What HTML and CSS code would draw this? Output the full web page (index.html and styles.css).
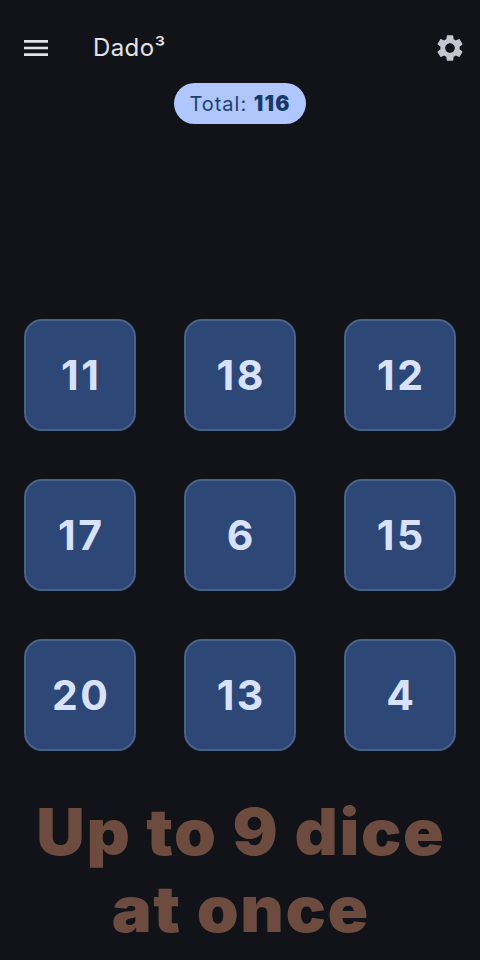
FILE: index.html
```html
<!DOCTYPE html>
<html lang="en">
<head>
<meta charset="utf-8">
<title>Dado³</title>
<link rel="stylesheet" href="styles.css">
</head>
<body>
<div class="app">
  <header class="bar">
    <svg class="icon" viewBox="0 0 24 24"><path d="M3 18h18v-2H3v2zm0-5h18v-2H3v2zm0-7v2h18V6H3z"/></svg>
    <h1 class="title">Dado³</h1>
    <svg class="icon gear" viewBox="0 0 24 24"><path d="M19.14 12.94c.04-.3.06-.61.06-.94 0-.32-.02-.64-.07-.94l2.03-1.58c.18-.14.23-.41.12-.61l-1.92-3.32c-.12-.22-.37-.29-.59-.22l-2.39.96c-.5-.38-1.03-.7-1.62-.94l-.36-2.54c-.04-.24-.24-.41-.48-.41h-3.84c-.24 0-.43.17-.47.41l-.36 2.54c-.59.24-1.13.57-1.62.94l-2.39-.96c-.22-.08-.47 0-.59.22L2.74 8.87c-.12.21-.08.47.12.61l2.03 1.58c-.05.3-.09.63-.09.94s.02.64.07.94l-2.03 1.58c-.18.14-.23.41-.12.61l1.92 3.32c.12.22.37.29.59.22l2.39-.96c.5.38 1.03.7 1.62.94l.36 2.54c.05.24.24.41.48.41h3.84c.24 0 .44-.17.47-.41l.36-2.54c.59-.24 1.13-.56 1.62-.94l2.39.96c.22.08.47 0 .59-.22l1.92-3.32c.12-.22.07-.47-.12-.61l-2.01-1.58zM12 15.6c-1.98 0-3.6-1.62-3.6-3.6s1.62-3.6 3.6-3.6 3.6 1.62 3.6 3.6-1.62 3.6-3.6 3.6z"/></svg>
  </header>
  <div class="total">Total: <b>116</b></div>
  <main class="grid">
    <div class="die">11</div>
    <div class="die">18</div>
    <div class="die">12</div>
    <div class="die">17</div>
    <div class="die">6</div>
    <div class="die">15</div>
    <div class="die">20</div>
    <div class="die">13</div>
    <div class="die">4</div>
  </main>
  <p class="promo">Up to 9 dice<br>at once</p>
</div>
</body>
</html>
```
FILE: styles.css
```css
* { box-sizing: border-box; }
html, body { margin: 0; height: 100%; }
body { background: #111318; font-family: Inter, "Liberation Sans", sans-serif; }
.app { height: 960px; display: flex; flex-direction: column; align-items: center; overflow: hidden; }
.bar { width: 100%; display: flex; align-items: center; padding: 32px 14.5px 0 20px; height: 64px; }
.icon { width: 32px; height: 32px; fill: #e2e2e9; flex: none; }
.gear { fill: #c4c6d0; }
.title { flex: 1; margin: 0 0 0 41px; font-size: 24px; font-weight: 400; line-height: 32px; letter-spacing: 0.4px; color: #e2e2e9; }
.total { margin-top: 19px; height: 41px; width: 132px; text-align: center; border-radius: 21px; background: #afc6ff; color: #1f3f6f; font-size: 20px; line-height: 42px; letter-spacing: 1px; white-space: nowrap; }
.total b { font-weight: 900; color: #153869; font-size: 21px; letter-spacing: 1.2px; }
.grid { margin-top: 195px; display: grid; grid-template-columns: repeat(3, 112px); grid-auto-rows: 112px; gap: 48px; }
.die { display: flex; align-items: center; justify-content: center; padding-left: 2.5px; background: #2d4876; border: 2px solid #4a6189; border-radius: 18px; color: #d8e2ff; font-size: 41px; font-weight: 700; letter-spacing: 2.5px; }
.promo { margin: 42px 0 0; padding-left: 2px; text-align: center; color: #6d4c3f; font-size: 64px; font-weight: 900; line-height: 77px; letter-spacing: 1.5px; white-space: nowrap; transform: scaleX(1.05); }
```
